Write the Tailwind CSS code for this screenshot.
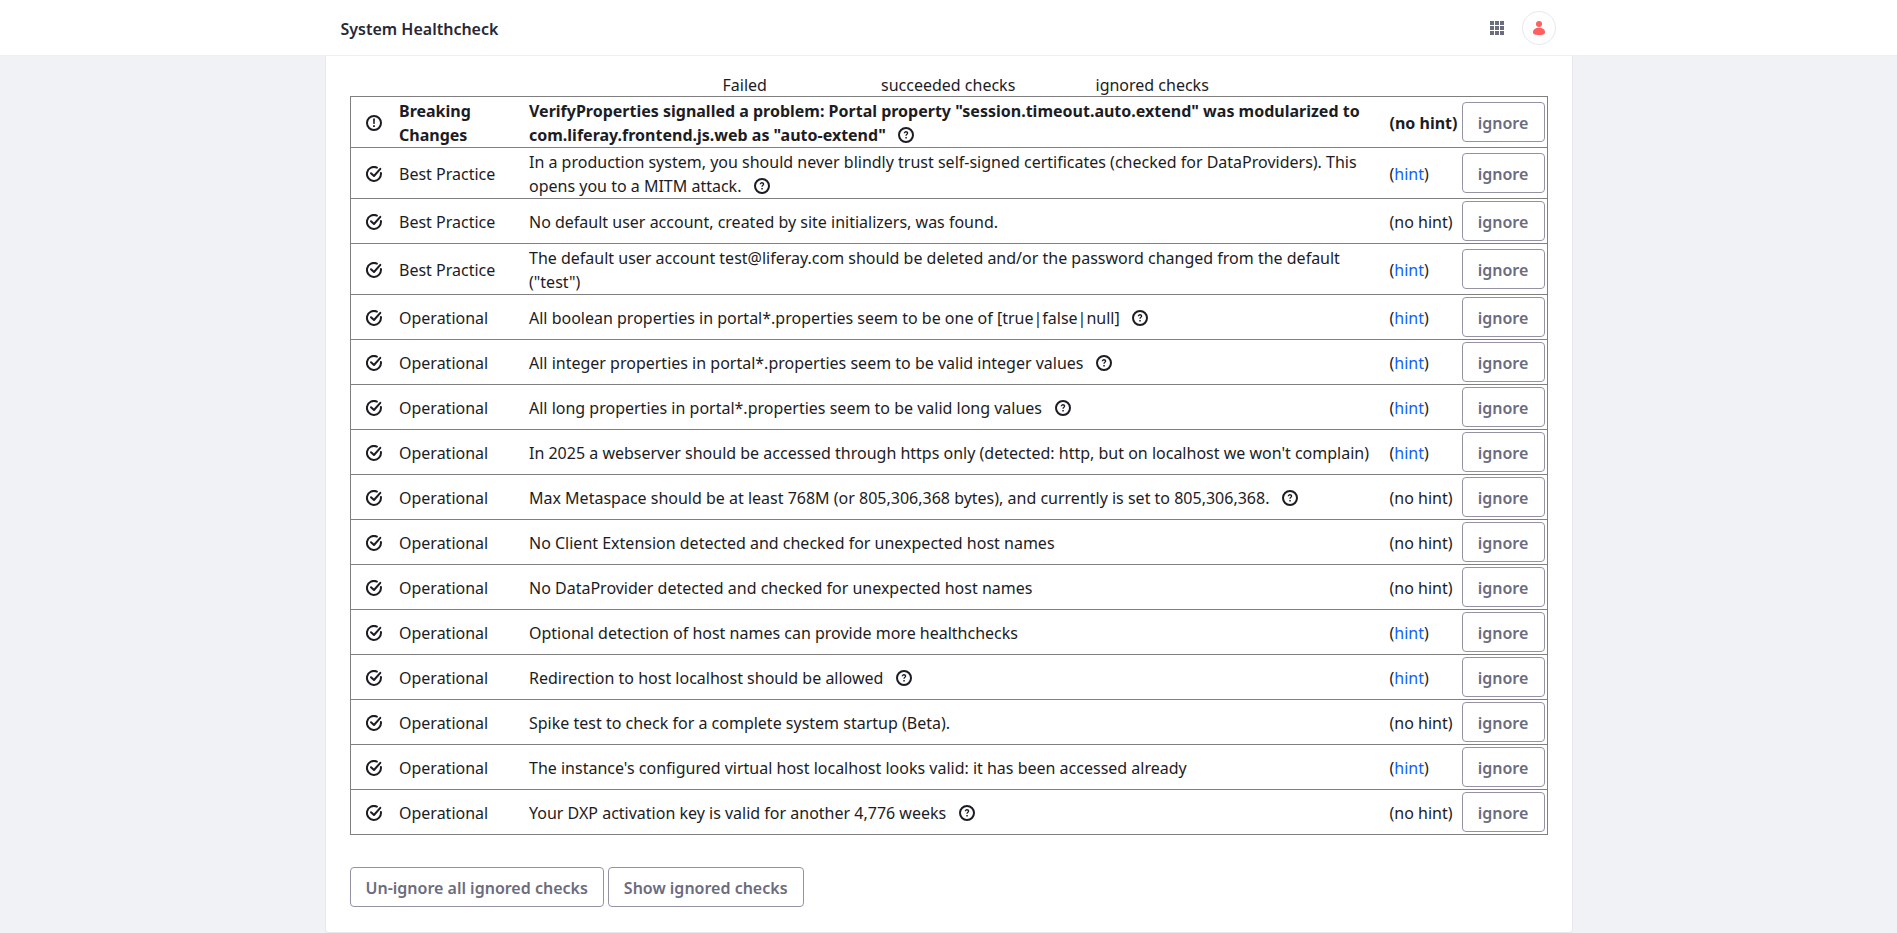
<!DOCTYPE html>
<html lang="en">
<head>
<meta charset="utf-8">
<title>System Healthcheck</title>
<script src="https://cdn.jsdelivr.net/npm/@tailwindcss/browser@4"></script>
</head>
<body class="h-[933px] overflow-hidden bg-[#f1f2f5] text-base text-[#1c1c24]" style="font-family:'Noto Sans',sans-serif">
<svg class="hidden">
  <symbol id="check" viewBox="0 0 16 16"><path d="M10.9 1.6A7 7 0 1 0 14.9 7" fill="none" stroke="currentColor" stroke-width="2" stroke-linecap="round"/><path d="M5 7.2L8 10L14.3 2.8" fill="none" stroke="currentColor" stroke-width="2" stroke-linecap="round" stroke-linejoin="round"/></symbol>
  <symbol id="warn" viewBox="0 0 16 16"><circle cx="8" cy="8" r="7" fill="none" stroke="currentColor" stroke-width="2"/><path d="M7.100 3.500h1.800L8.700 9H7.300zM7.100 10.200h1.800v1.800H7.100z" fill="currentColor"/></symbol>
  <symbol id="question" viewBox="0 0 16 16"><circle cx="8" cy="8" r="7" fill="none" stroke="currentColor" stroke-width="2"/><path d="M6.300 6.300C6.300 4.200 9.700 4.300 9.600 6.200C9.500 7.400 8 7.300 8 8.800" fill="none" stroke="currentColor" stroke-width="1.3"/><path d="M7.300 9.900h1.500v1.500H7.300z" fill="currentColor"/></symbol>
</svg>
<header class="h-14 border-b border-[#f0f0f3] bg-white">
  <div class="mx-auto flex h-full w-[1248px] items-center justify-between pl-4 pr-[17px]">
    <h1 class="pt-[3px] font-semibold text-[#272833]">System Healthcheck</h1>
    <div class="flex items-center gap-[18px]">
      <svg class="size-[14px] text-[#6b6c7e]" viewBox="0 0 14 14" fill="currentColor"><path d="M0 0h4v4H0zM5 0h4v4H5zM10 0h4v4h-4zM0 5h4v4H0zM5 5h4v4H5zM10 5h4v4h-4zM0 10h4v4H0zM5 10h4v4H5zM10 10h4v4h-4z"/></svg>
      <div class="flex size-[34px] items-center justify-center rounded-full border border-[#e7e7ed] bg-white">
        <svg class="h-[14px] w-3 text-[#ff5f5f]" viewBox="0 0 12 14" fill="currentColor"><circle cx="6" cy="3" r="3"/><path d="M6 6.800C2.500 6.800 0 8.500 0 11.300C0 13.300 1.500 14 6 14s6-.7 6-2.700C12 8.500 9.500 6.800 6 6.800z"/></svg>
      </div>
    </div>
  </div>
</header>
<main class="mx-auto h-[877px] w-[1248px] rounded-b border border-t-0 border-[#e7e7ed] bg-white px-6 pt-4">
  <div class="flex h-6 pl-[373px] pt-px">
    <span class="w-[158.500px]">Failed</span><span class="w-[214.500px]">succeeded checks</span><span>ignored checks</span>
  </div>
  <div id="checks" class="divide-y divide-[#808080] border border-[#808080]"></div>
  <div class="mt-8 flex gap-1">
    <button class="h-10 rounded border border-[#9792a3] px-[15px] pt-0.5 font-semibold text-[#6b6c7e]">Un-ignore all ignored checks</button>
    <button class="h-10 rounded border border-[#9792a3] px-[15px] pt-0.5 font-semibold text-[#6b6c7e]">Show ignored checks</button>
  </div>
</main>
<script>
const B = "Best Practice", O = "Operational";
// category, message, has hint link, has help icon
const checks = [
  ["Breaking Changes", 'VerifyProperties signalled a problem: Portal property "session.timeout.auto.extend" was modularized to com.liferay.frontend.js.web as "auto-extend"', 0, 1],
  [B, "In a production system, you should never blindly trust self-signed certificates (checked for DataProviders). This opens you to a MITM attack.", 1, 1],
  [B, "No default user account, created by site initializers, was found.", 0, 0],
  [B, 'The default user account test@liferay.com should be deleted and/or the password changed from the default ("test")', 1, 0],
  [O, "All boolean properties in portal*.properties seem to be one of [true|false|null]", 1, 1],
  [O, "All integer properties in portal*.properties seem to be valid integer values", 1, 1],
  [O, "All long properties in portal*.properties seem to be valid long values", 1, 1],
  [O, "In 2025 a webserver should be accessed through https only (detected: http, but on localhost we won't complain)", 1, 0],
  [O, "Max Metaspace should be at least 768M (or 805,306,368 bytes), and currently is set to 805,306,368.", 0, 1],
  [O, "No Client Extension detected and checked for unexpected host names", 0, 0],
  [O, "No DataProvider detected and checked for unexpected host names", 0, 0],
  [O, "Optional detection of host names can provide more healthchecks", 1, 0],
  [O, "Redirection to host localhost should be allowed", 1, 1],
  [O, "Spike test to check for a complete system startup (Beta).", 0, 0],
  [O, "The instance's configured virtual host localhost looks valid: it has been accessed already", 1, 0],
  [O, "Your DXP activation key is valid for another 4,776 weeks", 0, 1]
];
document.getElementById("checks").innerHTML = checks.map(([cat, msg, hint, help], i) => `
  <div class="grid grid-cols-[48.500px_130px_860.500px_72px_83px] items-center ${i ? "" : "font-bold"}">
    <svg class="mt-0.5 ml-[15.500px] size-4"><use href="#${i ? "check" : "warn"}"/></svg>
    <div class="pt-0.5 pr-8">${i ? `<span class="whitespace-nowrap">${cat}</span>` : cat}</div>
    <div class="pt-0.5 pr-4">${msg}${help ? '<svg class="ml-[12.500px] inline-block size-4 align-[-2px]"><use href="#question"/></svg>' : ""}</div>
    <div class="whitespace-nowrap pt-0.5">${hint ? '(<a class="text-[#0b5fff]">hint</a>)' : "(no hint)"}</div>
    <div class="py-0.5"><button class="block h-10 w-[83px] rounded border border-[#9792a3] pt-0.5 font-semibold text-[#6b6c7e]">ignore</button></div>
  </div>`).join("");
</script>
</body>
</html>
